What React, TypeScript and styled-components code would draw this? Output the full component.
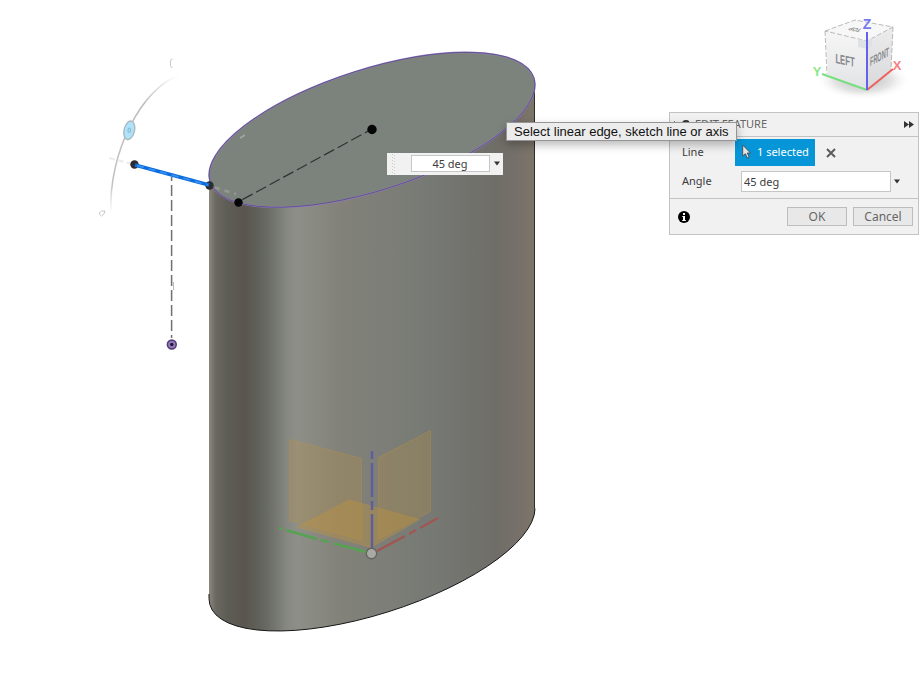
import React, { useState } from "react";
import styled, { createGlobalStyle } from "styled-components";

const GlobalStyle = createGlobalStyle`
  * { box-sizing: border-box; }
  html, body, #root { height: 100%; }
  body { margin: 0; background: #fff; overflow: hidden; }
`;

const uiFont = `"Noto Sans", "Open Sans", sans-serif`;

const Workspace = styled.main`
  position: relative;
  min-height: 100%;
  overflow: hidden;
  font-family: ${uiFont};
  font-size: 11px;
  color: #3c3c3c;
`;

const Scene = styled.svg`
  display: block;
`;

const ViewCube = styled.svg`
  position: absolute;
  top: 0;
  right: 0;
`;

const cubeFont = `"Liberation Sans", Arial, sans-serif`;

const CubeText = styled.text<{ $size: number }>`
  font-family: ${cubeFont};
  font-size: ${(p) => p.$size}px;
  font-weight: 700;
  text-anchor: middle;
`;

const Panel = styled.form`
  position: absolute;
  top: 112px;
  right: 4px;
  width: 250px;
  background: #f1f1f1;
  border: 1px solid #c3c3c3;
`;

const PanelHeader = styled.header`
  display: flex;
  align-items: center;
  gap: 5px;
  height: 24px;
  padding: 0 4px;
  border-bottom: 1px solid #c3c3c3;
`;

const PanelTitle = styled.h2`
  flex: 1;
  margin: 0;
  font-size: 11px;
  line-height: 14px;
  padding-bottom: 2px;
  padding-left: 1px;
  font-weight: 400;
  color: #666;
`;

const IconButton = styled.button`
  display: grid;
  place-items: center;
  padding: 0;
  border: 0;
  background: none;
  color: #444;
`;

const Fields = styled.div`
  display: flex;
  flex-direction: column;
  gap: 5px;
  padding: 2px 16px 6px 12px;
`;

const Field = styled.div`
  display: flex;
  align-items: center;
`;

const FieldLabel = styled.label<{ $wide?: boolean }>`
  width: ${(p) => (p.$wide ? 59 : 53)}px;
  line-height: 14px;
  padding-bottom: 2px;
`;

const SelectionButton = styled.button`
  display: flex;
  align-items: center;
  gap: 6px;
  height: 27px;
  margin-right: 11px;
  padding: 0 6px 2px 7px;
  border: 0;
  background: #0696d7;
  color: #fff;
  font: 11px ${uiFont};
`;

const ValueInput = styled.input<{ $centered?: boolean }>`
  flex: 1;
  min-width: 0;
  height: ${(p) => (p.$centered ? 17 : 21)}px;
  padding: 0 3px 1px 2px;
  border: 1px solid #c6c6c6;
  border-radius: 0;
  background: #fff;
  color: #3c3c3c;
  font: 11px ${uiFont};
  text-align: ${(p) => (p.$centered ? "center" : "left")};
`;

const MenuButton = styled(IconButton)<{ $narrow?: boolean }>`
  width: ${(p) => (p.$narrow ? 11 : 13)}px;
  height: 20px;
`;

const PanelFooter = styled.footer`
  display: flex;
  align-items: center;
  justify-content: space-between;
  height: 36px;
  padding: 0 5px 0 8px;
  border-top: 1px solid #c3c3c3;
`;

const Actions = styled.div`
  display: flex;
  gap: 6px;
`;

const ActionButton = styled.button`
  width: 60px;
  height: 19px;
  padding: 0;
  border: 1px solid #bdbdbd;
  background: #e8e8e8;
  color: #666;
  font: 12px/16px ${uiFont};
`;

const FloatingEditor = styled.div`
  position: absolute;
  left: 387px;
  top: 153px;
  display: flex;
  align-items: center;
  width: 116px;
  height: 22px;
  padding-bottom: 1px;
  background: #f1f1f1;
`;

const Grip = styled.svg`
  margin: 0 15px 0 4px;
`;

const Tooltip = styled.div`
  position: absolute;
  left: 506px;
  top: 122px;
  padding: 0 7px;
  border: 1px solid #959595;
  background: #ececec;
  box-shadow: 0 4px 10px rgba(0, 0, 0, 0.28);
  color: #111;
  font: 13px/17px "Liberation Sans", Arial, sans-serif;
  white-space: nowrap;
`;

const CaretDown = () => (
  <svg width="6" height="5" viewBox="0 0 6 5" aria-hidden="true">
    <path d="M0 .5h6L3 4.5z" fill="#333" />
  </svg>
);

const Model = () => (
  <Scene width="660" height="673" viewBox="0 0 660 673" role="img" aria-label="Elliptical cylinder">
    <defs>
      <linearGradient id="side" gradientUnits="userSpaceOnUse" x1="209" y1="0" x2="535" y2="0">
        <stop offset="0" stopColor="#8b887c" />
        <stop offset=".02" stopColor="#6b6961" />
        <stop offset=".055" stopColor="#5d5c55" />
        <stop offset=".11" stopColor="#5a564f" />
        <stop offset=".14" stopColor="#5e5e57" />
        <stop offset=".18" stopColor="#696b65" />
        <stop offset=".24" stopColor="#868881" />
        <stop offset=".27" stopColor="#8e8f88" />
        <stop offset=".31" stopColor="#8a8b83" />
        <stop offset=".4" stopColor="#82827a" />
        <stop offset=".5" stopColor="#7e7f78" />
        <stop offset=".65" stopColor="#787b75" />
        <stop offset=".8" stopColor="#72726d" />
        <stop offset=".88" stopColor="#6f6d67" />
        <stop offset=".96" stopColor="#77716a" />
        <stop offset=".985" stopColor="#7b7468" />
        <stop offset="1" stopColor="#7a766a" />
      </linearGradient>
      <linearGradient id="arc" gradientUnits="userSpaceOnUse" x1="0" y1="75" x2="0" y2="213">
        <stop offset="0" stopColor="#bbb" stopOpacity="0" />
        <stop offset=".2" stopColor="#bbb" />
        <stop offset=".8" stopColor="#c4c4c4" />
        <stop offset="1" stopColor="#ccc" stopOpacity="0" />
      </linearGradient>
    </defs>
    <path d="M209 174.500V598.500A170 60.500 -17.750 0 0 535 508.500V84.500z" fill="url(#side)" />
    <path d="M209 594V598.500A170 60.500 -17.750 0 0 535 508.500" fill="none" stroke="#161616" />
    <path d="M534.500 508.500V84.500" stroke="#2e2c29" />
    <ellipse cx="372" cy="129.800" rx="170" ry="60.500" transform="rotate(-17.750 372 129.800)" fill="#7c837d" stroke="#9680c8" strokeWidth="1.500" />
    <ellipse cx="372" cy="129.800" rx="170" ry="60.500" transform="rotate(-17.750 372 129.800)" fill="none" stroke="#3d3063" strokeWidth=".9" strokeOpacity=".6" />

    <g fill="#c49336" fillOpacity=".24" stroke="#c8943a" strokeOpacity=".3">
      <path d="M289.500 439.500L361.500 458.500V540L289.500 520.500z" />
      <path d="M378.500 457.500L430.500 430.500V511.500L378.500 539z" />
      <path d="M349 500L419.500 519.500L371 547.500L297 527z" fillOpacity=".36" />
    </g>
    <g strokeWidth="2.400" fill="none">
      <path d="M372 451V459M372 463V497M372 501V510M372 514V548" stroke="#605d9c" />
      <path d="M366 552L334 543.500M329 542L321 540M317 539L286 530M282 529l-3-1" stroke="#55a252" />
      <path d="M377 551L405 536M409 534L416 530M420 528L438 518" stroke="#a05653" />
    </g>
    <circle cx="371.500" cy="553.500" r="5.200" fill="#aaa9a5" stroke="#656560" strokeWidth="1.400" />

    <path d="M238 202L372 129" stroke="#303331" strokeWidth="1.200" strokeDasharray="11.500 4" strokeDashoffset="-5" />
    <path d="M171.600 177V338" stroke="#707070" strokeWidth="1.500" strokeDasharray="11 4" strokeDashoffset="7" />
    <path d="M173.500 282v8" stroke="#bbb" strokeWidth="1" />
    <path d="M215 187.500L236 194" stroke="#a4a8a2" strokeWidth="2.500" strokeDasharray="5 5" strokeOpacity=".6" />
    <path d="M240 137l5-3v2l-5 3z" fill="#a2a6a0" />

    <path d="M180 75C142 87 108 153 111 213" fill="none" stroke="url(#arc)" strokeWidth="1.600" />
    <path d="M109 158L132 164" stroke="#ececec" strokeWidth="2" strokeDasharray="6 3" />
    <ellipse cx="129.300" cy="130.300" rx="5.200" ry="9.400" transform="rotate(13 129.300 130.300)" fill="#aee3fb" stroke="#adb9be" strokeWidth="1.400" />
    <ellipse cx="129.300" cy="130.300" rx="1.300" ry="2.300" fill="none" stroke="#86b3c6" />
    <path d="M172.500 59h-1l-1 2v5l1 1.500h1M99.500 214.500v-2l2-1.500h3.500l-1 3-2.500 2z" fill="none" stroke="#bdbdbd" strokeWidth=".8" />

    <circle cx="134.500" cy="164.500" r="4.200" fill="#2b2d30" />
    <circle cx="209.500" cy="185.500" r="4.200" fill="#2b2d30" />
    <path d="M135 165L209 185" stroke="#0c6ddd" strokeWidth="3.600" />
    <path d="M137 165.500L208 185" stroke="#3691f5" strokeWidth="1.600" strokeDasharray="7 5" />
    <circle cx="238.500" cy="202.500" r="4.200" fill="#050505" />
    <circle cx="372" cy="129.500" r="4.700" fill="#050505" />
    <circle cx="171.800" cy="344.500" r="4.400" fill="#9880bd" stroke="#563c78" strokeWidth="1.600" />
    <circle cx="171.800" cy="344.500" r="1.800" fill="#241733" />
  </Scene>
);

const Cube = () => (
  <ViewCube width="123" height="110" viewBox="0 0 123 110" role="img" aria-label="View cube">
    <defs>
      <radialGradient id="cubeShadow">
        <stop offset="0" stopColor="#999" stopOpacity=".75" />
        <stop offset=".6" stopColor="#bbb" stopOpacity=".4" />
        <stop offset="1" stopColor="#fff" stopOpacity="0" />
      </radialGradient>
      <linearGradient id="cubeLeft" x1="0" y1="0" x2="0" y2="1">
        <stop offset="0" stopColor="#f6f6f6" />
        <stop offset="1" stopColor="#e2e3e5" />
      </linearGradient>
      <linearGradient id="cubeFront" x1="0" y1="0" x2="0" y2="1">
        <stop offset="0" stopColor="#ececed" />
        <stop offset="1" stopColor="#d9d9db" />
      </linearGradient>
    </defs>
    <ellipse cx="63" cy="80" rx="48" ry="20" fill="url(#cubeShadow)" />
    <path d="M25 31L67 41V90L28 75z" fill="url(#cubeLeft)" />
    <path d="M67 41L93 27L91 70L67 90z" fill="url(#cubeFront)" />
    <path d="M25 31L55 20L93 27L67 41z" fill="#f7f7f7" />
    <path d="M25 31L55 20L93 27L67 41zM25 31l2 43M93 27l-2 43" fill="none" stroke="#aaa" strokeDasharray="5 2" strokeWidth=".8" />
    <path d="M58 39l9 2 5-3v8l-5 3-9-2z" fill="#dfe2e5" />
    <CubeText $size={12} fill="#85888b" transform="matrix(.64 .13 0 1.120 45 65)">LEFT</CubeText>
    <CubeText $size={12} fill="#85888b" transform="matrix(.46 -.25 0 1.050 79.500 61)">FRONT</CubeText>
    <CubeText $size={11} fill="#8b8e91" transform="matrix(-.5 -.1 .5 -.4 57 28)">TOP</CubeText>
    <path d="M67 90L22 74" stroke="#78df80" strokeWidth="2" />
    <path d="M67 90L93 69" stroke="#ed6060" strokeWidth="2" />
    <path d="M67 90V32" stroke="#6262ed" strokeWidth="2" />
    <CubeText $size={14} fill="#7777f3" x="67" y="29">Z</CubeText>
    <CubeText $size={13} fill="#8be78d" x="17" y="76">Y</CubeText>
    <CubeText $size={13} fill="#f78181" x="97" y="70">X</CubeText>
  </ViewCube>
);

export default function App() {
  const [angle, setAngle] = useState("45 deg");
  return (
    <Workspace>
      <GlobalStyle />
      <Model />
      <Cube />
      <Panel onSubmit={(e) => e.preventDefault()}>
        <PanelHeader>
          <svg width="15" height="12" viewBox="0 0 15 12" aria-hidden="true">
            <path d="M.5 2v5" stroke="#777" />
            <circle cx="12" cy="5" r="4" fill="#333" />
          </svg>
          <PanelTitle>EDIT FEATURE</PanelTitle>
          <IconButton type="button" aria-label="Collapse panel">
            <svg width="10" height="7" viewBox="0 0 10 7"><path d="M0 0l5 3.500L0 7zM5 0l5 3.500L5 7z" fill="#333" /></svg>
          </IconButton>
        </PanelHeader>
        <Fields>
          <Field>
            <FieldLabel htmlFor="line">Line</FieldLabel>
            <SelectionButton id="line" type="button">
              <svg width="9" height="15" viewBox="0 0 9 15" aria-hidden="true">
                <path d="M.7 1v11l2.700-2.300 1.800 4.300 2-1-1.900-4h3.200z" fill="#e4e4e4" stroke="#3f4b52" strokeWidth=".9" />
              </svg>
              1 selected
            </SelectionButton>
            <IconButton type="button" aria-label="Clear selection">
              <svg width="10" height="10" viewBox="0 0 10 10"><path d="M1 1l8 8M9 1L1 9" stroke="#5c5c5c" strokeWidth="2" /></svg>
            </IconButton>
          </Field>
          <Field>
            <FieldLabel $wide htmlFor="angle">Angle</FieldLabel>
            <ValueInput id="angle" value={angle} onChange={(e) => setAngle(e.target.value)} />
            <MenuButton $narrow type="button" aria-label="Angle options"><CaretDown /></MenuButton>
          </Field>
        </Fields>
        <PanelFooter>
          <IconButton type="button" aria-label="Information">
            <svg width="12" height="12" viewBox="0 0 12 12">
              <circle cx="6" cy="6" r="6" fill="#000" />
              <path d="M5 2h2v2H5zM4.300 5H7v4h.8v1H4.200V9H5V6h-.7z" fill="#fff" />
            </svg>
          </IconButton>
          <Actions>
            <ActionButton type="submit">OK</ActionButton>
            <ActionButton type="button">Cancel</ActionButton>
          </Actions>
        </PanelFooter>
      </Panel>
      <FloatingEditor>
        <Grip width="5" height="20" viewBox="0 0 5 20" aria-hidden="true">
          <path d="M1.500 0v20" stroke="#ccc" strokeDasharray="1 2" />
          <path d="M3.500 1v19" stroke="#ccc" strokeDasharray="1 2" />
        </Grip>
        <ValueInput $centered aria-label="Angle value" value={angle} onChange={(e) => setAngle(e.target.value)} />
        <MenuButton type="button" aria-label="Angle value options"><CaretDown /></MenuButton>
      </FloatingEditor>
      <Tooltip role="tooltip">Select linear edge, sketch line or axis</Tooltip>
    </Workspace>
  );
}
